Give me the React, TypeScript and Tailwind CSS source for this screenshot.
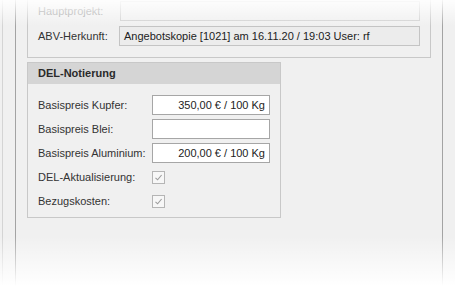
import React from "react";

function Check() {
  return (
    <div className="flex h-[13px] w-[13px] items-center justify-center border border-[#b5b5b5] bg-[#f7f7f7]">
      <svg width="9" height="9" viewBox="0 0 9 9" fill="none">
        <path d="M1.5 4.8 L3.6 6.8 L7.6 2" stroke="#9c9c9c" strokeWidth="1.1" />
      </svg>
    </div>
  );
}

function Field({ value }: { value?: string }) {
  return (
    <div className="flex h-[20px] w-[118px] items-center justify-end border border-[#a6a6a6] bg-white pr-[4px] text-[#222]">
      {value}
    </div>
  );
}

const rows: { label: string; kind: "field" | "check"; value?: string }[] = [
  { label: "Basispreis Kupfer:", kind: "field", value: "350,00 € / 100 Kg" },
  { label: "Basispreis Blei:", kind: "field" },
  { label: "Basispreis Aluminium:", kind: "field", value: "200,00 € / 100 Kg" },
  { label: "DEL-Aktualisierung:", kind: "check" },
  { label: "Bezugskosten:", kind: "check" },
];

export default function App() {
  return (
    <div className="relative flex h-[286px] w-[455px] overflow-hidden bg-[#f0f0f0] font-['Liberation_Sans',Arial,sans-serif] text-[11px] text-[#333]">
      {/* left outside strip */}
      <div className="w-[15px] shrink-0 pl-[2px]">
        <div className="h-full w-[1px] bg-[#d4d4d4]" />
      </div>

      {/* window */}
      <div className="flex w-[428px] shrink-0 flex-col border-x border-[#a3a3a3] px-[11px]">
        {/* upper group box, top cut off */}
        <div className="flex flex-col gap-[5px] border-x border-b border-[#c8c8c8] pb-[11px] pl-[10px] pr-[10px] pt-[1px]">
          <div className="flex h-[20px] items-center">
            <span className="w-[82px] text-[#a0a0a0]">Hauptprojekt:</span>
            <div className="h-[20px] flex-1 border border-[#d0d0d0] bg-[#f0f0f0]" />
          </div>
          <div className="flex h-[20px] items-center">
            <span className="w-[81px]">ABV-Herkunft:</span>
            <div className="flex h-[20px] flex-1 items-center border border-[#c4c4c4] bg-[#ececec] pl-[4px] text-[#222]">
              Angebotskopie [1021] am 16.11.20 / 19:03 User: rf
            </div>
          </div>
        </div>

        {/* DEL-Notierung */}
        <div className="mt-[4px] w-[254px] border border-[#c8c8c8]">
          <div className="flex h-[21px] items-center bg-[#d5d5d5] pl-[10px] font-bold text-[#2a2a2a]">
            DEL-Notierung
          </div>
          <div className="flex flex-col gap-[4px] pb-[6px] pl-[10px] pt-[11px]">
            {rows.map((r) => (
              <div key={r.label} className="flex h-[20px] items-center">
                <span className="w-[114px]">{r.label}</span>
                {r.kind === "field" ? <Field value={r.value} /> : <Check />}
              </div>
            ))}
          </div>
        </div>
      </div>

      {/* right outside strip */}
      <div className="flex-1" />

      {/* fades */}
      <div className="pointer-events-none absolute inset-x-0 top-0 h-[26px] bg-gradient-to-b from-white/90 to-transparent" />
      <div className="pointer-events-none absolute inset-x-0 bottom-0 h-[50px] bg-gradient-to-t from-white to-transparent" />
    </div>
  );
}
